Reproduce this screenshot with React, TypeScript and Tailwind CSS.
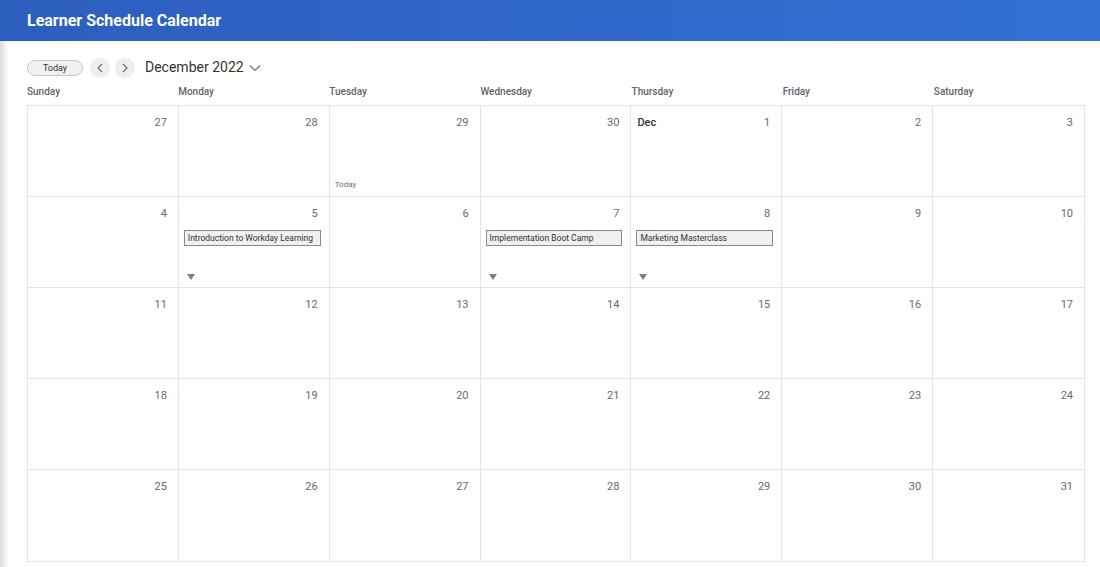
import React from 'react'

const days = ['Sunday', 'Monday', 'Tuesday', 'Wednesday', 'Thursday', 'Friday', 'Saturday']

type Cell = { n: number; dec?: boolean; today?: boolean; event?: string }

const weeks: Cell[][] = [
  [{ n: 27 }, { n: 28 }, { n: 29, today: true }, { n: 30 }, { n: 1, dec: true }, { n: 2 }, { n: 3 }],
  [
    { n: 4 },
    { n: 5, event: 'Introduction to Workday Learning' },
    { n: 6 },
    { n: 7, event: 'Implementation Boot Camp' },
    { n: 8, event: 'Marketing Masterclass' },
    { n: 9 },
    { n: 10 }
  ],
  [11, 12, 13, 14, 15, 16, 17].map(n => ({ n })),
  [18, 19, 20, 21, 22, 23, 24].map(n => ({ n })),
  [25, 26, 27, 28, 29, 30, 31].map(n => ({ n }))
]

function DayCell({ cell, last }: { cell: Cell; last: boolean }) {
  return (
    <div className={`relative h-full ${last ? '' : 'border-r border-[#e3e4e6]'}`}>
      <div className="flex items-center justify-between pl-[6px] pr-[11px] pt-[10px] text-[11px] leading-[14px] text-[#666a6f]">
        <span className="font-medium text-[#333]">{cell.dec ? 'Dec' : ''}</span>
        <span>{cell.n}</span>
      </div>
      {cell.event && (
        <div className="ml-[5px] mr-[8px] mt-[9px] h-[16px] border border-[#858a90] bg-[#eef0f2] px-[3px] text-[8.5px] leading-[14px] text-[#333] truncate">
          {cell.event}
        </div>
      )}
      {cell.event && (
        <div className="absolute left-[8px] bottom-[7px] h-0 w-0 border-l-[4px] border-r-[4px] border-t-[6px] border-l-transparent border-r-transparent border-t-[#7b8087]" />
      )}
      {cell.today && (
        <div className="absolute left-[5px] bottom-[5px] text-[8px] text-[#6b6f74]">Today</div>
      )}
    </div>
  )
}

export default function App() {
  return (
    <div className="h-[567px] w-[1100px] overflow-hidden bg-white font-['Roboto','Liberation_Sans',sans-serif]">
      <div className="flex h-[41px] items-center bg-gradient-to-r from-[#2c5ebd] to-[#3371d6] pl-[27px]">
        <h1 className="text-[16px] font-bold text-white">Learner Schedule Calendar</h1>
      </div>
      <div className="flex h-[526px]">
        <div className="w-[9px] bg-gradient-to-r from-[#dcdcdc] via-[#efefef] to-white" />
        <div className="flex-1 pl-[18px] pr-[15px]">
          <div className="flex items-center h-[29px] mt-[12px]">
            <button className="h-[16px] w-[56px] rounded-full border border-[#c4c8cc] bg-[#eef0f2] text-[9px] leading-[14px] text-[#333]">
              Today
            </button>
            <button className="ml-[7px] flex h-[20px] w-[20px] items-center justify-center rounded-full bg-[#eceef0]">
              <svg width="8" height="10" viewBox="0 0 8 10" fill="none" stroke="#6b6f74" strokeWidth="1.2">
                <path d="M6 1 L2 5 L6 9" />
              </svg>
            </button>
            <button className="ml-[5px] flex h-[20px] w-[20px] items-center justify-center rounded-full bg-[#eceef0]">
              <svg width="8" height="10" viewBox="0 0 8 10" fill="none" stroke="#6b6f74" strokeWidth="1.2">
                <path d="M2 1 L6 5 L2 9" />
              </svg>
            </button>
            <span className="ml-[10px] text-[14px] text-[#333]">December 2022</span>
            <svg className="ml-[5px]" width="12" height="8" viewBox="0 0 12 8" fill="none" stroke="#6b6f74" strokeWidth="1.1">
              <path d="M1 1.5 L6 6.5 L11 1.5" />
            </svg>
          </div>
          <div className="grid grid-cols-7 h-[18px] items-center">
            {days.map(d => (
              <div key={d} className="text-[10px] font-medium text-[#60646a]">{d}</div>
            ))}
          </div>
          <div className="mt-[5px] grid grid-rows-5 h-[457px] border border-[#e3e4e6]">
            {weeks.map((w, i) => (
              <div key={i} className={`grid grid-cols-7 ${i < 4 ? 'border-b border-[#e3e4e6]' : ''}`}>
                {w.map((c, j) => (
                  <DayCell key={j} cell={c} last={j === 6} />
                ))}
              </div>
            ))}
          </div>
        </div>
      </div>
    </div>
  )
}
